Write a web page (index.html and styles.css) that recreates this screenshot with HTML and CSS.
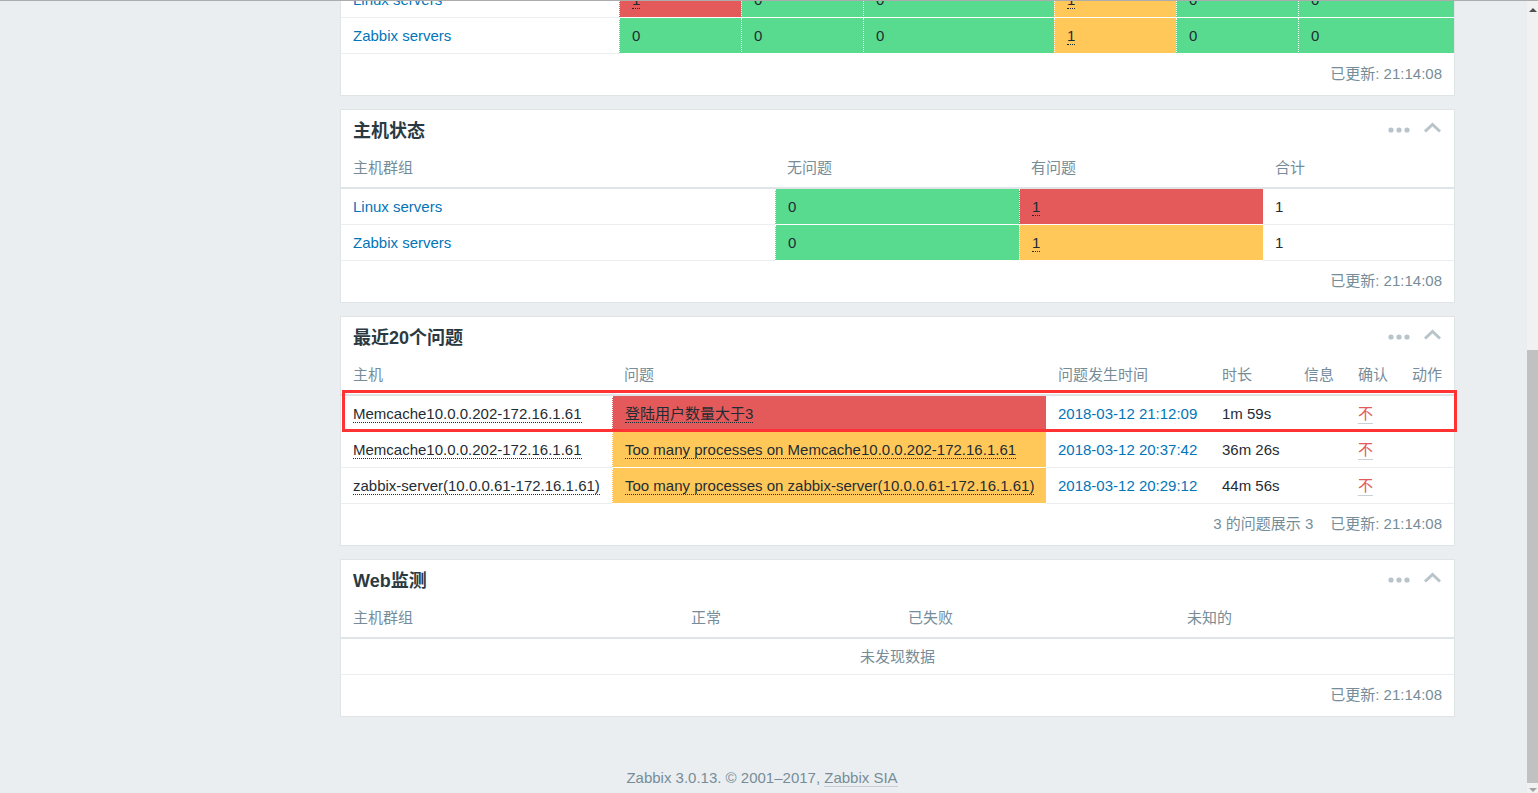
FILE: index.html
```html
<!DOCTYPE html>
<html lang="zh-CN">
<head>
    <meta charset="UTF-8">
    <title>仪表板 - Zabbix</title>
    <link rel="stylesheet" href="styles.css">
</head>
<body>
    <div class="page">
        <div class="dashboard">
            <div class="column">

                <!-- 系统状态 -->
                <div class="panel panel-first">
                    <div class="panel-head">
                        <h4>系统状态</h4>
                        <div class="panel-tools">
                            <svg class="icon-dots" width="22" height="6" viewBox="0 0 22 6"><circle cx="3" cy="3" r="2.6"/><circle cx="11" cy="3" r="2.6"/><circle cx="19" cy="3" r="2.6"/></svg>
                            <svg class="icon-up" width="19" height="11" viewBox="0 0 19 11"><path d="M2 9.5 L9.5 2.5 L17 9.5"/></svg>
                        </div>
                    </div>
                    <table class="grid sys">
                        <colgroup><col><col><col><col><col><col><col></colgroup>
                        <thead>
                            <tr><th>主机群组</th><th>灾难</th><th>严重</th><th>一般严重</th><th>警告</th><th>信息</th><th>未分类</th></tr>
                        </thead>
                        <tbody>
                            <tr>
                                <td><a class="link" href="#">Linux servers</a></td>
                                <td class="red"><span class="hint">1</span></td>
                                <td class="green">0</td>
                                <td class="green">0</td>
                                <td class="orange"><span class="hint">1</span></td>
                                <td class="green">0</td>
                                <td class="green">0</td>
                            </tr>
                            <tr>
                                <td><a class="link" href="#">Zabbix servers</a></td>
                                <td class="green">0</td>
                                <td class="green">0</td>
                                <td class="green">0</td>
                                <td class="orange"><span class="hint">1</span></td>
                                <td class="green">0</td>
                                <td class="green">0</td>
                            </tr>
                        </tbody>
                    </table>
                    <div class="panel-foot">
                        <span>已更新: 21:14:08</span>
                    </div>
                </div>

                <!-- 主机状态 -->
                <div class="panel">
                    <div class="panel-head">
                        <h4>主机状态</h4>
                        <div class="panel-tools">
                            <svg class="icon-dots" width="22" height="6" viewBox="0 0 22 6"><circle cx="3" cy="3" r="2.6"/><circle cx="11" cy="3" r="2.6"/><circle cx="19" cy="3" r="2.6"/></svg>
                            <svg class="icon-up" width="19" height="11" viewBox="0 0 19 11"><path d="M2 9.5 L9.5 2.5 L17 9.5"/></svg>
                        </div>
                    </div>
                    <table class="grid hosts">
                        <colgroup><col><col><col><col></colgroup>
                        <thead>
                            <tr><th>主机群组</th><th>无问题</th><th>有问题</th><th>合计</th></tr>
                        </thead>
                        <tbody>
                            <tr>
                                <td><a class="link" href="#">Linux servers</a></td>
                                <td class="green">0</td>
                                <td class="red"><span class="hint">1</span></td>
                                <td>1</td>
                            </tr>
                            <tr>
                                <td><a class="link" href="#">Zabbix servers</a></td>
                                <td class="green">0</td>
                                <td class="orange"><span class="hint">1</span></td>
                                <td>1</td>
                            </tr>
                        </tbody>
                    </table>
                    <div class="panel-foot">
                        <span>已更新: 21:14:08</span>
                    </div>
                </div>

                <!-- 最近20个问题 -->
                <div class="panel">
                    <div class="panel-head">
                        <h4>最近20个问题</h4>
                        <div class="panel-tools">
                            <svg class="icon-dots" width="22" height="6" viewBox="0 0 22 6"><circle cx="3" cy="3" r="2.6"/><circle cx="11" cy="3" r="2.6"/><circle cx="19" cy="3" r="2.6"/></svg>
                            <svg class="icon-up" width="19" height="11" viewBox="0 0 19 11"><path d="M2 9.5 L9.5 2.5 L17 9.5"/></svg>
                        </div>
                    </div>
                    <table class="grid issues">
                        <colgroup><col><col><col><col><col><col><col></colgroup>
                        <thead>
                            <tr><th>主机</th><th>问题</th><th>问题发生时间</th><th>时长</th><th>信息</th><th>确认</th><th>动作</th></tr>
                        </thead>
                        <tbody>
                            <tr>
                                <td><span class="hint">Memcache10.0.0.202-172.16.1.61</span></td>
                                <td class="red"><span class="hint">登陆用户数量大于3</span></td>
                                <td><a class="link" href="#">2018-03-12 21:12:09</a></td>
                                <td>1m 59s</td>
                                <td></td>
                                <td><a class="ack" href="#">不</a></td>
                                <td></td>
                            </tr>
                            <tr>
                                <td><span class="hint">Memcache10.0.0.202-172.16.1.61</span></td>
                                <td class="orange"><span class="hint">Too many processes on Memcache10.0.0.202-172.16.1.61</span></td>
                                <td><a class="link" href="#">2018-03-12 20:37:42</a></td>
                                <td>36m 26s</td>
                                <td></td>
                                <td><a class="ack" href="#">不</a></td>
                                <td></td>
                            </tr>
                            <tr>
                                <td><span class="hint">zabbix-server(10.0.0.61-172.16.1.61)</span></td>
                                <td class="orange"><span class="hint">Too many processes on zabbix-server(10.0.0.61-172.16.1.61)</span></td>
                                <td><a class="link" href="#">2018-03-12 20:29:12</a></td>
                                <td>44m 56s</td>
                                <td></td>
                                <td><a class="ack" href="#">不</a></td>
                                <td></td>
                            </tr>
                        </tbody>
                    </table>
                    <div class="panel-foot">
                        <span>3 的问题展示 3</span>
                        <span>已更新: 21:14:08</span>
                    </div>
                    <div class="mark"></div>
                </div>

                <!-- Web监测 -->
                <div class="panel">
                    <div class="panel-head">
                        <h4>Web监测</h4>
                        <div class="panel-tools">
                            <svg class="icon-dots" width="22" height="6" viewBox="0 0 22 6"><circle cx="3" cy="3" r="2.6"/><circle cx="11" cy="3" r="2.6"/><circle cx="19" cy="3" r="2.6"/></svg>
                            <svg class="icon-up" width="19" height="11" viewBox="0 0 19 11"><path d="M2 9.5 L9.5 2.5 L17 9.5"/></svg>
                        </div>
                    </div>
                    <table class="grid web">
                        <colgroup><col><col><col><col></colgroup>
                        <thead>
                            <tr><th>主机群组</th><th>正常</th><th>已失败</th><th>未知的</th></tr>
                        </thead>
                        <tbody>
                            <tr><td class="nodata" colspan="4">未发现数据</td></tr>
                        </tbody>
                    </table>
                    <div class="panel-foot">
                        <span>已更新: 21:14:08</span>
                    </div>
                </div>

            </div>
        </div>
        <div class="footer">
            Zabbix 3.0.13. &copy; 2001&ndash;2017, <a href="#">Zabbix SIA</a>
        </div>
    </div>
    <div class="scrollbar">
        <div class="arrow-up"></div>
        <div class="thumb"></div>
        <div class="arrow-down"></div>
    </div>
</body>
</html>
```

FILE: styles.css
```css
* {
    box-sizing: border-box;
}
html, body {
    height: 100%;
}
body {
    margin: 0;
    background: #ebeef0;
    font-family: "Liberation Sans", Arial, "Noto Sans CJK SC", sans-serif;
    font-size: 15px;
    line-height: 18px;
    color: #1f2c33;
    border-top: 1px solid #acacac;
    display: flex;
    overflow: hidden;
}
a {
    text-decoration: none;
}
.page {
    flex: 1;
    display: flex;
    flex-direction: column;
    overflow: hidden;
}
.dashboard {
    padding-left: 340px;
}
.column {
    width: 1115px;
}
.panel {
    position: relative;
    background: #fff;
    border: 1px solid #dfe4e7;
    margin-bottom: 13px;
}
.panel:last-child {
    margin-bottom: 0;
}
/* page is scrolled: first widget starts above the window */
.panel-first {
    margin-top: -99px;
}
.panel-head {
    height: 40px;
    padding: 2px 12px 0 12px;
    display: flex;
    align-items: center;
    justify-content: space-between;
}
.panel-head h4 {
    margin: 0;
    font-size: 18px;
    font-weight: bold;
    line-height: 22px;
    color: #2b3a42;
}
.panel-tools {
    display: flex;
    align-items: center;
    gap: 13px;
    margin-top: -3px;
}
.icon-dots {
    fill: #b8c4ca;
}
.icon-up {
    fill: none;
    stroke: #b8c4ca;
    stroke-width: 3;
    margin-top: -4px;
}
.grid {
    width: 100%;
    border-collapse: separate;
    border-spacing: 0;
    table-layout: fixed;
}
.grid th {
    height: 39px;
    padding: 0 12px 1px 12px;
    text-align: left;
    font-weight: normal;
    color: #768d99;
    border-bottom: 2px solid #dfe4e7;
    white-space: nowrap;
}
.grid td {
    height: 36px;
    padding: 0 12px;
    border-bottom: 1px solid #ebeef0;
    white-space: nowrap;
    overflow: hidden;
}
.grid td.green,
.grid td.red,
.grid td.orange {
    border-bottom-color: #fff;
    border-left: 1px dotted #fff;
}
.green {
    background: #59db8f;
}
.red {
    background: #e45959;
}
.orange {
    background: #ffc859;
}
.link {
    color: #0275b8;
}
.hint {
    border-bottom: 1px dotted #1f2c33;
}
.ack {
    color: #e45959;
    border-bottom: 1px solid #c9d1d6;
    padding-bottom: 1px;
}
.nodata {
    text-align: center;
    color: #768d99;
}

/* column widths */
.sys col:nth-child(1) { width: 278px; }
.sys col:nth-child(2) { width: 122px; }
.sys col:nth-child(3) { width: 122px; }
.sys col:nth-child(4) { width: 191px; }
.sys col:nth-child(5) { width: 122px; }
.sys col:nth-child(6) { width: 122px; }
.sys col:nth-child(7) { width: 156px; }

.hosts col:nth-child(1) { width: 434px; }
.hosts col:nth-child(2) { width: 244px; }
.hosts col:nth-child(3) { width: 244px; }
.hosts col:nth-child(4) { width: 191px; }

.issues col:nth-child(1) { width: 271px; }
.issues col:nth-child(2) { width: 434px; }
.issues col:nth-child(3) { width: 164px; }
.issues col:nth-child(4) { width: 82px; }
.issues col:nth-child(5) { width: 54px; }
.issues col:nth-child(6) { width: 54px; }
.issues col:nth-child(7) { width: 54px; }

.web col:nth-child(1) { width: 338px; }
.web col:nth-child(2) { width: 217px; }
.web col:nth-child(3) { width: 279px; }
.web col:nth-child(4) { width: 279px; }

.panel-foot {
    height: 41px;
    padding: 0 12px 1px 12px;
    display: flex;
    align-items: center;
    justify-content: flex-end;
    gap: 17px;
    color: #768d99;
}

/* red annotation box drawn over the first problem row */
.mark {
    position: absolute;
    left: 1px;
    right: -3px;
    top: 73px;
    height: 42px;
    border: 3px solid #f33;
}

.footer {
    padding-top: 52px;
    padding-right: 3px;
    line-height: 18px;
    text-align: center;
    color: #768d99;
}
.footer a {
    color: #768d99;
    border-bottom: 1px solid #c5ced3;
}

.scrollbar {
    width: 11px;
    background: #f1f1f1;
    display: flex;
    flex-direction: column;
    align-items: center;
}
.arrow-up {
    margin-top: 7px;
    width: 0;
    height: 0;
    border-left: 4px solid transparent;
    border-right: 4px solid transparent;
    border-bottom: 4px solid #505050;
}
.thumb {
    margin-top: 338px;
    width: 11px;
    height: 433px;
    background: #c1c1c1;
}
.arrow-down {
    margin-top: 5px;
    width: 0;
    height: 0;
    border-left: 4px solid transparent;
    border-right: 4px solid transparent;
    border-top: 4px solid #a3a3a3;
}
```
